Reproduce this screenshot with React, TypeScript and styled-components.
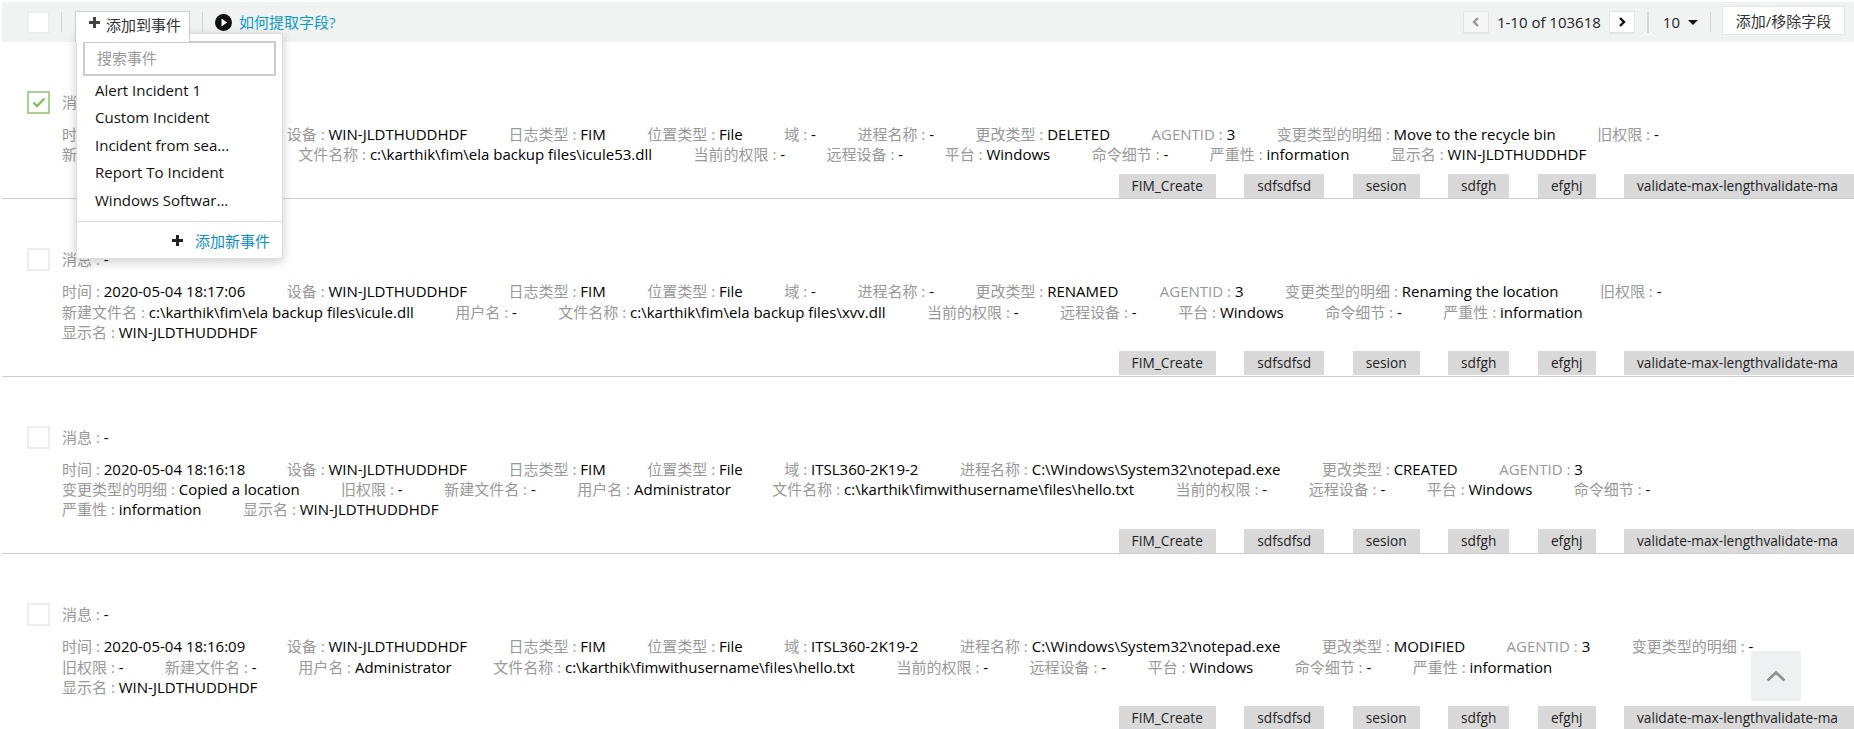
import React from "react";
import styled, { createGlobalStyle } from "styled-components";

const Global = createGlobalStyle`
  html, body { margin: 0; padding: 0; height: 729px; overflow: hidden; background: #fff; }
  body { font-family: "Open Sans", "Noto Sans CJK SC", sans-serif; font-size: 15px; color: #000; }
`;
const Page = styled.div`position: relative; padding: 2px 0 0 2px; height: 727px; overflow: hidden;`;
const Toolbar = styled.div`
  height: 40px; background: #f1f3f3; display: flex; align-items: center; padding-left: 25px; position: relative;
`;
const Check = styled.div<{ $checked?: boolean }>`
  width: 23px; height: 23px; box-sizing: border-box; flex: none; background: #fff;
  border: 2px solid ${(p) => (p.$checked ? "#a6d190" : "#eceeee")};
  display: flex; align-items: center; justify-content: center;
`;
const Divider = styled.span<{ $h?: number; $ml: number; $w?: number }>`
  display: block; flex: none; width: ${(p) => p.$w ?? 1}px; height: ${(p) => p.$h ?? 20}px; background: #d4d6d6; margin-left: ${(p) => p.$ml}px;
`;
const AddBtn = styled.div`
  margin-left: 13px; margin-top: 9px; width: 115px; height: 31px; box-sizing: border-box; background: #fff; position: relative; z-index: 3;
  border: 1px solid #ccc; border-bottom: none; display: flex; align-items: flex-start; padding: 4px 0 0 13px; gap: 6px; color: #333; line-height: 18px;
  align-self: flex-start;
`;
const HowTo = styled.a`
  display: flex; align-items: center; gap: 7px; margin-left: 12px; color: #0c9ad6; line-height: 20px;
`;
const Pager = styled.div`margin-left: auto; display: flex; align-items: center;`;
const PageBtn = styled.div<{ $off?: boolean }>`
  width: 26px; height: 23px; box-sizing: border-box; display: flex; align-items: center; justify-content: center;
  background: ${(p) => (p.$off ? "#f6f6f6" : "#fff")}; border: 1px solid #e4e6e6; border-bottom-width: 2px;
`;
const PageText = styled.span`margin: 0 8px; color: #222; white-space: nowrap; line-height: 20px;`;
const PerPage = styled.div`margin-left: 14px; display: flex; align-items: center; gap: 8px; color: #222;`;
const Caret = styled.span`width: 0; height: 0; border: 5px solid transparent; border-top-color: #111; border-bottom: none;`;
const FieldBtn = styled.div`
  margin: 0 9px 0 11px; width: 123px; height: 29px; box-sizing: border-box; background: #fff; border: 1px solid #e6e8e8; color: #333;
  display: flex; align-items: center; justify-content: center; position: relative; top: -2px;
`;
const Menu = styled.div`
  position: absolute; left: 76px; top: 33px; width: 207px; height: 226px; box-sizing: border-box; background: #fff; z-index: 2;
  border: 1px solid #ddd; box-shadow: 0 3px 10px rgba(0,0,0,.2); padding: 7px 7px 0 6px; display: flex; flex-direction: column;
`;
const Search = styled.input`
  width: 193px; height: 35px; box-sizing: border-box; border: 2px solid #ccc; outline: none; padding: 0 12px 2px; font: inherit; flex: none;
  &::placeholder { color: #999; opacity: 1; }
`;
const MenuList = styled.div`margin-top: 1px; padding-left: 12px; display: flex; flex-direction: column;`;
const MenuItem = styled.div`height: 27.4px; line-height: 27.4px; white-space: nowrap; color: #111;`;
const MenuFoot = styled.div`
  margin: auto -7px 0 -6px; height: 36px; border-top: 1px solid #ddd; display: flex; align-items: center; justify-content: flex-end;
  gap: 12px; padding-right: 12px; color: #0c8fc9;
`;
const Row = styled.div`
  padding-top: 49px; border-bottom: 1px solid #ccc;
  &:last-child { border-bottom: none; }
`;
const RowMain = styled.div`display: flex; padding-left: 25px;`;
const RowBody = styled.div`margin-left: 12px; width: 1716px;`;
const Message = styled.div`line-height: 23px; height: 23px; margin-bottom: 10px; color: #999;`;
const Fields = styled.div`display: flex; flex-wrap: wrap; column-gap: 41.5px; line-height: 20.43px;`;
const Field = styled.span`white-space: nowrap;`;
const Label = styled.span`color: #999;`;
const Value = styled.span`color: #000;`;
const Tags = styled.div`display: flex; justify-content: flex-end; gap: 28.5px; margin-top: 9px; padding-bottom: 0.2px; overflow: hidden; font-size: 13.7px;`;
const Tag = styled.span<{ $last?: boolean }>`
  height: 24px; line-height: 24px; background: #d9d9d9; color: #222; padding: 0 13px; flex: none; white-space: nowrap;
  ${(p) => (p.$last ? "width: 230px; box-sizing: border-box;" : "")}
`;
const TopBtn = styled.div`
  position: absolute; left: 1751px; top: 651px; width: 50px; height: 50px; background: #eef0f1; display: flex; align-items: center; justify-content: center; z-index: 4;
`;

const Plus = ({ c = "#444", s = 11 }: { c?: string; s?: number }) => (
  <svg width={s} height={s} viewBox="0 0 11 11" style={{ flex: "none", marginTop: 1 }}>
    <path d="M4 0h3v4h4v3H7v4H4V7H0V4h4z" fill={c} />
  </svg>
);
const Play = () => (
  <svg width="17" height="17" viewBox="0 0 17 17">
    <circle cx="8.5" cy="8.5" r="8.5" fill="#111" />
    <path d="M6.5 4.5 12 8.5 6.5 12.5z" fill="#fff" />
  </svg>
);
const Chev = ({ d, c }: { d: "l" | "r"; c: string }) => (
  <svg width="8" height="10" viewBox="0 0 8 10">
    <path d={d === "l" ? "M6 1 2 5l4 4" : "M2 1l4 4-4 4"} fill="none" stroke={c} strokeWidth="2.4" />
  </svg>
);

type F = [string, string];
const host = "WIN-JLDTHUDDHDF";
const rows: { time: string; fields: F[]; checked?: boolean }[] = [
  {
    checked: true,
    time: "2020-05-04 18:17:06",
    fields: [["日志类型", "FIM"], ["位置类型", "File"], ["域", "-"], ["进程名称", "-"], ["更改类型", "DELETED"], ["AGENTID", "3"],
      ["变更类型的明细", "Move to the recycle bin"], ["旧权限", "-"], ["新建文件名", "-"], ["用户名", "-"],
      ["文件名称", "c:\\karthik\\fim\\ela backup files\\icule53.dll"], ["当前的权限", "-"], ["远程设备", "-"], ["平台", "Windows"],
      ["命令细节", "-"], ["严重性", "information"], ["显示名", host]],
  },
  {
    time: "2020-05-04 18:17:06",
    fields: [["日志类型", "FIM"], ["位置类型", "File"], ["域", "-"], ["进程名称", "-"], ["更改类型", "RENAMED"], ["AGENTID", "3"],
      ["变更类型的明细", "Renaming the location"], ["旧权限", "-"], ["新建文件名", "c:\\karthik\\fim\\ela backup files\\icule.dll"], ["用户名", "-"],
      ["文件名称", "c:\\karthik\\fim\\ela backup files\\xvv.dll"], ["当前的权限", "-"], ["远程设备", "-"], ["平台", "Windows"],
      ["命令细节", "-"], ["严重性", "information"], ["显示名", host]],
  },
  {
    time: "2020-05-04 18:16:18",
    fields: [["日志类型", "FIM"], ["位置类型", "File"], ["域", "ITSL360-2K19-2"], ["进程名称", "C:\\Windows\\System32\\notepad.exe"], ["更改类型", "CREATED"], ["AGENTID", "3"],
      ["变更类型的明细", "Copied a location"], ["旧权限", "-"], ["新建文件名", "-"], ["用户名", "Administrator"],
      ["文件名称", "c:\\karthik\\fimwithusername\\files\\hello.txt"], ["当前的权限", "-"], ["远程设备", "-"], ["平台", "Windows"],
      ["命令细节", "-"], ["严重性", "information"], ["显示名", host]],
  },
  {
    time: "2020-05-04 18:16:09",
    fields: [["日志类型", "FIM"], ["位置类型", "File"], ["域", "ITSL360-2K19-2"], ["进程名称", "C:\\Windows\\System32\\notepad.exe"], ["更改类型", "MODIFIED"], ["AGENTID", "3"],
      ["变更类型的明细", "-"], ["旧权限", "-"], ["新建文件名", "-"], ["用户名", "Administrator"],
      ["文件名称", "c:\\karthik\\fimwithusername\\files\\hello.txt"], ["当前的权限", "-"], ["远程设备", "-"], ["平台", "Windows"],
      ["命令细节", "-"], ["严重性", "information"], ["显示名", host]],
  },
];
const tags = ["FIM_Create", "sdfsdfsd", "sesion", "sdfgh", "efghj", "validate-max-lengthvalidate-ma"];
const incidents = ["Alert Incident 1", "Custom Incident", "Incident from sea...", "Report To Incident", "Windows Softwar..."];

export default function App() {
  return (
    <Page>
      <Global />
      <Toolbar>
        <Check />
        <Divider $ml={11} />
        <AddBtn><Plus />添加到事件</AddBtn>
        <Divider $ml={12} />
        <HowTo><Play />如何提取字段?</HowTo>
        <Pager>
          <PageBtn $off><Chev d="l" c="#999" /></PageBtn>
          <PageText>1-10 of 103618</PageText>
          <PageBtn><Chev d="r" c="#111" /></PageBtn>
          <Divider $ml={12} $w={2} $h={21} />
          <PerPage>10 <Caret /></PerPage>
          <Divider $ml={12} />
          <FieldBtn>添加/移除字段</FieldBtn>
        </Pager>
      </Toolbar>
      <Menu>
        <Search placeholder="搜索事件" readOnly />
        <MenuList>
          {incidents.map((i) => <MenuItem key={i}>{i}</MenuItem>)}
        </MenuList>
        <MenuFoot><Plus c="#222" />添加新事件</MenuFoot>
      </Menu>
      {rows.map((r, i) => (
        <Row key={i}>
          <RowMain>
            <Check $checked={r.checked}>
              {r.checked && (
                <svg width="14" height="11" viewBox="0 0 14 11">
                  <path d="M1.5 5.5 5 9 12.5 1.5" fill="none" stroke="#7fbf5e" strokeWidth="2.4" />
                </svg>
              )}
            </Check>
            <RowBody>
              <Message>消息 : <Value>-</Value></Message>
              <Fields>
                <Field><Label>时间 : </Label><Value>{r.time}</Value></Field>
                <Field><Label>设备 : </Label><Value>{host}</Value></Field>
                {r.fields.map(([l, v]) => (
                  <Field key={l}><Label>{l} : </Label><Value>{v}</Value></Field>
                ))}
              </Fields>
            </RowBody>
          </RowMain>
          <Tags>
            {tags.map((t, n) => <Tag key={t} $last={n === tags.length - 1}>{t}</Tag>)}
          </Tags>
        </Row>
      ))}
      <TopBtn>
        <svg width="20" height="12" viewBox="0 0 20 12">
          <path d="M1.5 10.5 10 2.5l8.5 8" fill="none" stroke="#8e9192" strokeWidth="2.6" />
        </svg>
      </TopBtn>
    </Page>
  );
}
